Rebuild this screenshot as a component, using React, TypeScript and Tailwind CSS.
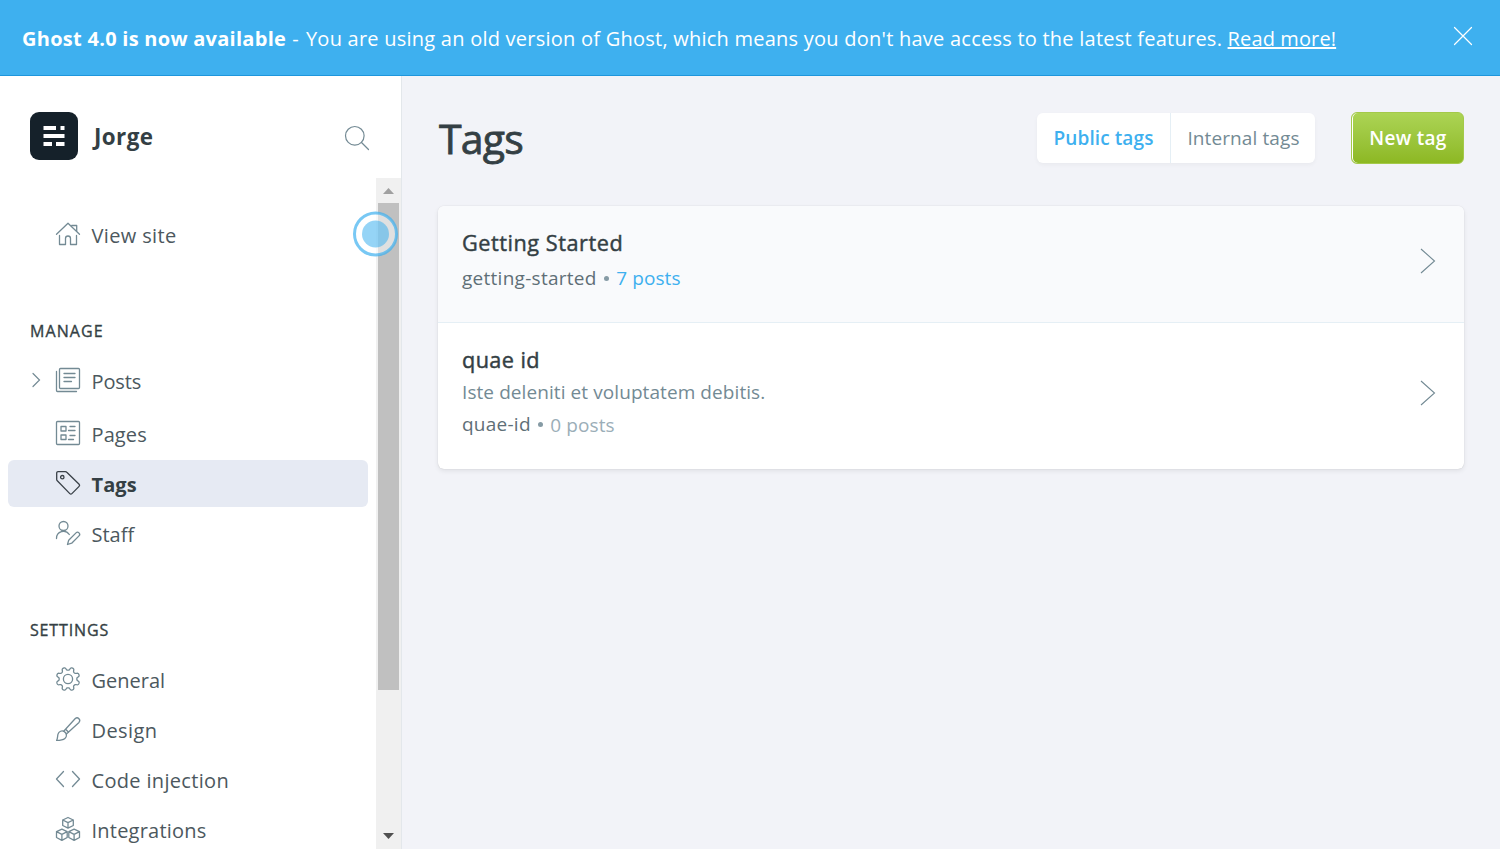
import { type ReactNode } from "react";

type IconProps = { children: ReactNode; className?: string };

function Icon({ children, className = "text-[#738a94]" }: IconProps) {
  return (
    <svg
      viewBox="0 0 24 24"
      fill="none"
      stroke="currentColor"
      strokeWidth="1.3"
      strokeLinecap="round"
      strokeLinejoin="round"
      className={`mb-0.5 size-6 shrink-0 overflow-visible ${className}`}
    >
      {children}
    </svg>
  );
}

const HomeIcon = () => (
  <Icon>
    <path d="M.5 12.200 12 1.300l11.500 10.900" />
    <path d="M15.700 3.500h5v5.500" />
    <path d="M3.500 13.500v9h6v-6a2.500 2.500 0 0 1 5 0v6h6v-9" />
  </Icon>
);

const PostsIcon = () => (
  <Icon>
    <rect x="3.5" y=".5" width="20" height="20" rx="1" />
    <path d="M20.5 23.500h-19a1 1 0 0 1-1-1v-19M8 5.500h11M8 9.500h11M8 13.500h7.500" />
  </Icon>
);

const PagesIcon = () => (
  <Icon>
    <rect x=".5" y=".5" width="23" height="23" rx="1" />
    <path d="M5 5.500h5v4.500h-5zM5 14h5v4.500h-5zM14 5.500h5M12.500 9.500h6.500M14 14.500h5M12.500 18.500h5" />
  </Icon>
);

const TagIcon = () => (
  <Icon className="text-[#394047]">
    <path d="M.7 2v6.400a2 2 0 0 0 .6 1.400l12.500 12.800a1.500 1.500 0 0 0 2.100 0l7.200-7.200a1.500 1.500 0 0 0 0-2.100L10.800 1.300A2 2 0 0 0 9.400.7H2A1.300 1.300 0 0 0 .7 2z" />
    <circle cx="6.300" cy="6.200" r="1.700" />
  </Icon>
);

const StaffIcon = () => (
  <Icon>
    <circle cx="7.500" cy="5" r="4.500" />
    <path d="M.5 17.500a7 7 0 0 1 12.800-4" />
    <path d="m11.500 23.500 1.200-4.300 7.300-7.300a2.100 2.100 0 0 1 3 3l-7.300 7.300z" />
  </Icon>
);

// Eight rounded teeth: the radius swings between a flat crest and a flat valley.
const gearPoints = Array.from({ length: 128 }, (_, i) => {
  const angle = (i / 128) * Math.PI * 2;
  const radius = 10.3 + 1.5 * Math.tanh(2 * Math.cos(8 * (angle - Math.PI / 8)));
  return `${(12 + radius * Math.cos(angle)).toFixed(2)},${(12 + radius * Math.sin(angle)).toFixed(2)}`;
}).join(" ");

const GearIcon = () => (
  <Icon>
    <circle cx="12" cy="12" r="4.600" />
    <polygon points={gearPoints} />
  </Icon>
);

const BrushIcon = () => (
  <Icon>
    <path d="M.6 23.400c1.200-2 .8-4 1.400-6.200.8-3 4-4 6.300-2.600 2.600 1.500 2.900 5 .6 6.900-2.200 1.800-5 1.900-8.300 1.900z" />
    <path d="m7.700 14.200 11.600-12.700a2.700 2.700 0 0 1 3.700 3.900L10.400 17M9.600 12.200l3 3" />
  </Icon>
);

const CodeIcon = () => (
  <Icon>
    <path d="M7.500 4.500.5 12l7 7.500M16.500 4.500l7 7.500-7 7.500" />
  </Icon>
);

const CubesIcon = () => (
  <Icon>
    <path d="M12 .5 17.300 3v5.500L12 11.200 6.700 8.500V3zM6.700 3 12 5.700 17.300 3M12 5.700v5.500" />
    <path d="m5.900 12.200 5.300 2.500v5.800l-5.300 2.900L.5 20.500v-5.800zM.5 14.700l5.400 2.700 5.300-2.700M5.900 17.400v6" />
    <path d="m18.100 12.200 5.400 2.500v5.800l-5.400 2.900-5.300-2.900v-5.800zM12.800 14.700l5.300 2.700 5.400-2.700M18.100 17.400v6" />
  </Icon>
);

type NavItemProps = {
  icon: ReactNode;
  label: string;
  track?: string;
  active?: boolean;
  expandable?: boolean;
  className?: string;
};

function NavItem({ icon, label, track = "", active, expandable, className = "" }: NavItemProps) {
  return (
    <li
      className={`ml-2 flex h-[47px] w-[360px] shrink-0 items-center rounded-[6px] ${active ? "bg-[#e6eaf3] font-bold text-[#343f44]" : "text-[#4c585e]"} ${className}`}
    >
      <span className="flex w-12 shrink-0 pl-[23px]">
        {expandable && (
          <svg viewBox="0 0 10 16" className="mb-0.5 h-4 w-2.5" fill="none" stroke="#738a94" strokeWidth="1.2" strokeLinecap="round">
            <path d="m2 1.500 6.500 6.500L2 14.500" />
          </svg>
        )}
      </span>
      {icon}
      <span className={`ml-[11.5px] pt-[3px] text-[20px] leading-6 ${track}`}>{label}</span>
    </li>
  );
}

function SectionTitle({ children, track }: { children: ReactNode; track: string }) {
  return (
    <h4 className={`mt-[63px] ml-[30px] text-[16px] leading-5 text-[#343f44] [-webkit-text-stroke:0.35px_#343f44] ${track}`}>
      {children}
    </h4>
  );
}

function Chevron({ className }: { className: string }) {
  return (
    <svg viewBox="0 0 16 26" className={`h-[26px] w-4 shrink-0 ${className}`} fill="none" stroke="#738a94" strokeWidth="1.1">
      <path d="M1 1l13.500 12L1 25" />
    </svg>
  );
}

const Dot = () => <span className="mx-[7px] mt-px size-[5.5px] rounded-full bg-[#869ba5]" />;

function TagName({ children, track }: { children: ReactNode; track: string }) {
  return (
    <h3 className={`text-[21.7px] leading-[30px] text-[#343f44] [-webkit-text-stroke:0.45px_#343f44] ${track}`}>{children}</h3>
  );
}

export default function App() {
  return (
    <div className="flex h-[849px] w-[1500px] flex-col overflow-hidden bg-[#f2f3f8] font-['Open_Sans',sans-serif]">
      <header className="flex h-[76px] shrink-0 items-center border-b border-[#1e96dc] bg-[#3eb0ef] pr-[27px] pl-[22px] text-[20px] text-white">
        <p className="grow pt-0.5 whitespace-nowrap">
          <b className="tracking-[0.27px]">Ghost 4.0 is now available</b>
          <span className="tracking-[1px]"> - </span>
          <span className="tracking-[0.24px]">
            You are using an old version of Ghost, which means you don't have access to the latest features.{" "}
          </span>
          <a className="tracking-[0.12px] underline">Read more!</a>
        </p>
        <svg viewBox="0 0 20 20" className="mt-[-3px] size-5" stroke="#fff" strokeWidth="1.2" strokeLinecap="round">
          <path d="m1.500 1.500 17 17M18.500 1.500l-17 17" />
        </svg>
      </header>
      <div className="flex min-h-0 grow">
        <aside className="relative flex w-[402px] shrink-0 flex-col border-r border-[#e3e7eb] bg-white">
          <div className="flex h-[102px] shrink-0 items-center pt-[18px] pr-8 pl-[30px]">
            <svg viewBox="0 0 48 48" className="size-12">
              <rect width="48" height="48" rx="9" fill="#15212a" />
              <path fill="#fff" d="M13.500 14h12.500v4h-12.500zM30.500 14h4v4h-4zM13.500 22h21v4h-21zM13.500 30h8.500v4h-8.500zM26 30h8.500v4h-8.500z" />
            </svg>
            <span className="ml-4 grow pt-0.5 text-[22.4px] font-bold tracking-[0.4px] text-[#343f44]">Jorge</span>
            <svg viewBox="0 0 24 24" className="mt-1 size-6 overflow-visible" fill="none" stroke="#738a94" strokeWidth="1.2" strokeLinecap="round">
              <circle cx="9.800" cy="9.800" r="9.300" />
              <path d="m16.500 16.500 7 7" />
            </svg>
          </div>
          <div className="flex min-h-0 grow">
            <nav className="flex w-[376px] flex-col overflow-hidden">
              <ul className="mt-[33px]">
                <NavItem icon={<HomeIcon />} label="View site" track="tracking-[0.35px]" />
              </ul>
              <SectionTitle track="tracking-[1.1px]">MANAGE</SectionTitle>
              <ul className="mt-4 flex flex-col gap-[3px]">
                <NavItem icon={<PostsIcon />} label="Posts" track="tracking-[-0.1px]" expandable className="mb-[3px]" />
                <NavItem icon={<PagesIcon />} label="Pages" track="tracking-[0.1px]" />
                <NavItem icon={<TagIcon />} label="Tags" track="tracking-[0.1px]" active />
                <NavItem icon={<StaffIcon />} label="Staff" />
              </ul>
              <SectionTitle track="tracking-[0.85px]">SETTINGS</SectionTitle>
              <ul className="mt-4 flex flex-col gap-[3px]">
                <NavItem icon={<GearIcon />} label="General" />
                <NavItem icon={<BrushIcon />} label="Design" track="tracking-[0.4px]" />
                <NavItem icon={<CodeIcon />} label="Code injection" track="tracking-[0.33px]" />
                <NavItem icon={<CubesIcon />} label="Integrations" track="tracking-[0.22px]" />
              </ul>
            </nav>
            <div className="flex w-[25px] flex-col items-center bg-[#f0f0f0] pb-[10px]">
              <svg viewBox="0 0 11 6" className="mt-[10px] h-1.5 w-[11px] shrink-0">
                <path d="M0 6h11L5.500 0z" fill="#a0a0a0" />
              </svg>
              <div className="mt-[9px] h-[487px] w-[21px] shrink-0 bg-[#c0c0c0]" />
              <svg viewBox="0 0 11 6" className="mt-auto h-1.5 w-[11px] shrink-0">
                <path d="M0 0h11L5.500 6z" fill="#505050" />
              </svg>
            </div>
          </div>
          <svg viewBox="0 0 46 46" className="absolute top-[135px] left-[352px] size-[46px] overflow-visible">
            <circle cx="23.500" cy="23" r="21" fill="#fff" fillOpacity=".5" stroke="#3eb0ef" strokeOpacity=".7" strokeWidth="3" />
            <circle cx="23.500" cy="23" r="13.500" fill="#3eb0ef" fillOpacity=".55" />
          </svg>
        </aside>
        <main className="grow px-9 pt-9">
          <div className="flex h-[52px] items-center">
            <h1 className="grow pl-px text-[41px] leading-[52px] tracking-[-0.8px] text-[#343f44] [-webkit-text-stroke:0.8px_#343f44]">
              Tags
            </h1>
            <div className="mr-9 flex h-[50px] w-[278px] rounded-[6px] bg-white text-[19px] shadow-[0_2px_4px_rgba(0,0,0,0.04)]">
              <div className="flex w-[134px] items-center justify-center border-r border-[#e5eff5] font-semibold tracking-[0.1px] text-[#3eb0ef]">
                Public tags
              </div>
              <div className="flex grow items-center justify-center pl-px tracking-[0.1px] text-[#738a94]">Internal tags</div>
            </div>
            <button className="h-[52px] w-[113px] rounded-[6px] border border-[#a4c94a] bg-linear-to-b from-[#acd454] to-[#8db822] pl-px text-[19px] font-semibold tracking-[0.3px] text-white shadow-[inset_1px_0_0_#fff]">
              New tag
            </button>
          </div>
          <ul className="mt-[42px] overflow-hidden rounded-[6px] bg-white shadow-[0_0_1px_rgba(0,0,0,0.2),0_2px_5px_rgba(0,0,0,0.08)]">
            <li className="flex h-[117px] border-b border-[#e5eff5] bg-[#f9fafc] pr-7 pl-6">
              <div className="grow pt-[22px]">
                <TagName track="tracking-[0.53px]">Getting Started</TagName>
                <p className="mt-1 flex items-center text-[19px] leading-8 text-[#5f6f77]">
                  <span className="tracking-[0.27px]">getting-started</span>
                  <Dot />
                  <span className="tracking-[0.1px] text-[#3eb0ef]">7 posts</span>
                </p>
              </div>
              <Chevron className="mt-[42px]" />
            </li>
            <li className="flex h-[146px] pr-7 pl-6">
              <div className="grow pt-[22px]">
                <TagName track="tracking-[0.4px]">quae id</TagName>
                <p className="mt-px text-[19px] leading-8 tracking-[0.08px] text-[#738a94]">Iste deleniti et voluptatem debitis.</p>
                <p className="flex h-8 items-center text-[19px] leading-8 text-[#5f6f77]">
                  <span className="tracking-[0.25px]">quae-id</span>
                  <Dot />
                  <span className="pt-0.5 tracking-[0.1px] text-[#9baeb8]">0 posts</span>
                </p>
              </div>
              <Chevron className="mt-[57px]" />
            </li>
          </ul>
        </main>
      </div>
    </div>
  );
}
